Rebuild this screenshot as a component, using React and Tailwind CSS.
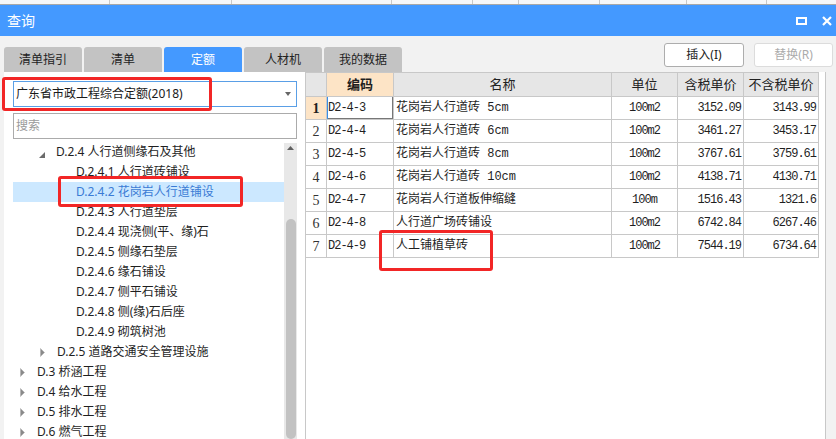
import React from 'react';

const tabs = ['清单指引', '清单', '定额', '人材机', '我的数据'];

const tree = [
  { text: 'D.2.4 人行道侧缘石及其他', tri: 'open', pad: 'pl-[26px]' },
  { text: 'D.2.4.1 人行道砖铺设', pad: 'pl-[63px]' },
  { text: 'D.2.4.2 花岗岩人行道铺设', pad: 'pl-[63px]', selected: true },
  { text: 'D.2.4.3 人行道垫层', pad: 'pl-[63px]' },
  { text: 'D.2.4.4 现浇侧(平、缘)石', pad: 'pl-[63px]' },
  { text: 'D.2.4.5 侧缘石垫层', pad: 'pl-[63px]' },
  { text: 'D.2.4.6 缘石铺设', pad: 'pl-[63px]' },
  { text: 'D.2.4.7 侧平石铺设', pad: 'pl-[63px]' },
  { text: 'D.2.4.8 侧(缘)石后座', pad: 'pl-[63px]' },
  { text: 'D.2.4.9 砌筑树池', pad: 'pl-[63px]' },
  { text: 'D.2.5 道路交通安全管理设施', tri: 'closed', pad: 'pl-[27px]' },
  { text: 'D.3 桥涵工程', tri: 'closed', pad: 'pl-[7px]' },
  { text: 'D.4 给水工程', tri: 'closed', pad: 'pl-[7px]' },
  { text: 'D.5 排水工程', tri: 'closed', pad: 'pl-[7px]' },
  { text: 'D.6 燃气工程', tri: 'closed', pad: 'pl-[7px]' },
];

const rows = [
  ['D2-4-3', '花岗岩人行道砖 5cm', '100m2', '3152.09', '3143.99'],
  ['D2-4-4', '花岗岩人行道砖 6cm', '100m2', '3461.27', '3453.17'],
  ['D2-4-5', '花岗岩人行道砖 8cm', '100m2', '3767.61', '3759.61'],
  ['D2-4-6', '花岗岩人行道砖 10cm', '100m2', '4138.71', '4130.71'],
  ['D2-4-7', '花岗岩人行道板伸缩缝', '100m', '1516.43', '1321.6'],
  ['D2-4-8', '人行道广场砖铺设', '100m2', '6742.84', '6267.46'],
  ['D2-4-9', '人工铺植草砖', '100m2', '7544.19', '6734.64'],
];

const mono = "font-['Liberation_Mono','Noto_Sans_CJK_SC',monospace]";

const Triangle = ({ type }) =>
  type === 'open' ? (
    <svg width="6" height="6" viewBox="0 0 6 6" className="mt-[5px]">
      <polygon points="6,0 6,6 0,6" fill="#6b6b6b" />
    </svg>
  ) : (
    <svg width="5" height="9" viewBox="0 0 5 9">
      <polygon points="0.5,0.5 4.5,4.5 0.5,8.5" fill="#8a8a8a" stroke="#b0b0b0" strokeWidth="0.6" />
    </svg>
  );

const App = () => {
  return (
    <div className="relative w-[836px] h-[439px] overflow-hidden bg-[#F2F2F2] flex flex-col font-['Noto_Sans','Noto_Sans_CJK_SC',sans-serif] text-[#1f1f1f]">
      {/* strip of the window behind */}
      <div className="h-[5px] flex bg-[#F6F7F9] border-b border-[#A8A8A8]">
        <div className="w-[110px] border-r border-[#C8C8C8]" />
        <div className="w-[122px] border-r border-[#C8C8C8]" />
        <div className="w-[160px] border-r border-[#C8C8C8]" />
        <div className="w-[81px] border-r border-[#C8C8C8]" />
        <div className="w-[46px] border-r border-[#C8C8C8]" />
        <div className="w-[81px] border-r border-[#C8C8C8]" />
        <div className="w-[87px] border-r border-[#C8C8C8]" />
        <div className="w-[80px] border-r border-[#C8C8C8]" />
      </div>

      {/* title bar */}
      <div className="h-[31px] shrink-0 bg-[#4499FF] flex items-center justify-between pl-[7px] pr-[4px]">
        <span className="text-[14px] text-white leading-none">查询</span>
        <div className="flex items-center gap-[15px]">
          <div className="w-[11px] h-[8px] border-2 border-white" />
          <svg width="10" height="10" viewBox="0 0 10 10">
            <path d="M1 1L9 9M9 1L1 9" stroke="white" strokeWidth="2.2" />
          </svg>
        </div>
      </div>

      {/* body */}
      <div className="flex-1 min-h-0 flex flex-col pl-[4px] pr-[3px]">
        <div className="h-[36px] shrink-0 flex justify-between">
          <div className="self-end flex gap-[2px]">
            {tabs.map((t) => (
              <div
                key={t}
                className={
                  t === '定额'
                    ? 'w-[78px] h-[25px] rounded-t-[3px] bg-[#4499FF] text-white text-[12px] flex items-center justify-center'
                    : 'w-[78px] h-[25px] rounded-t-[3px] bg-[#C3C3C3] text-[#222] text-[12px] flex items-center justify-center'
                }
              >
                {t}
              </div>
            ))}
          </div>
          <div className="flex gap-[10px] pt-[7px]">
            <button className="w-[80px] h-[24px] rounded-[3px] border border-[#ADADAD] bg-white text-[12px] text-[#222]">
              插入(I)
            </button>
            <button className="w-[79px] h-[24px] rounded-[3px] border border-[#DCDCDC] bg-white text-[12px] text-[#ABABAB]">
              替换(R)
            </button>
          </div>
        </div>

        <div className="flex-1 min-h-0 flex">
          {/* left panel */}
          <div className="w-[301px] bg-white pl-[9px] pt-[9px] flex flex-col">
            <div className="w-[284px] h-[26px] border border-[#5A9FE6] flex items-center justify-between pl-[2px] pr-[5px]">
              <span className="text-[12px] text-[#1a1a1a]">广东省市政工程综合定额(2018)</span>
              <svg width="6" height="4" viewBox="0 0 6 4">
                <polygon points="0,0 6,0 3,4" fill="#666" />
              </svg>
            </div>
            <div className="mt-[6px] w-[284px] h-[26px] border border-[#ABABAB] flex items-center pl-[2px]">
              <span className="text-[12px] text-[#9a9a9a]">搜索</span>
            </div>
            <div className="mt-[3px] flex flex-1 min-h-0">
              <div className="w-[271px] flex flex-col">
                {tree.map((n) => (
                  <div
                    key={n.text}
                    className={`h-[20px] shrink-0 flex items-center ${n.pad} ${n.selected ? 'bg-[#CCE8FF] text-[#3A7BD5]' : ''}`}
                  >
                    {n.tri && (
                      <span className="w-[17px] flex">
                        <Triangle type={n.tri} />
                      </span>
                    )}
                    <span className="text-[12px] leading-[20px] whitespace-nowrap">{n.text}</span>
                  </div>
                ))}
              </div>
              <div className="mt-[1px] w-[13px] bg-[#E8E8E8] flex flex-col items-center">
                <svg width="7" height="4" viewBox="0 0 7 4" className="mt-[3px]">
                  <polygon points="0,4 7,4 3.5,0" fill="#606060" />
                </svg>
                <div className="mt-[69px] w-[10px] flex-1 rounded-full bg-[#C2C2C2]" />
              </div>
            </div>
          </div>

          {/* right panel */}
          <div className="w-[521px] bg-white border-l border-r border-[#C8C8C8]">
            <div className="grid grid-cols-[21px_67px_218px_66px_66px_75px] border-t border-[#C8C8C8] w-[513px]">
              <div className="h-[24px] bg-[#E6E6E6] border-r border-b border-[#C8C8C8]" />
              <div className="h-[24px] bg-[#FDE4C6] border-r border-b border-[#C8C8C8] text-[13px] font-bold flex items-center justify-center">
                编码
              </div>
              {['名称', '单位', '含税单价', '不含税单价'].map((h) => (
                <div
                  key={h}
                  className="h-[24px] bg-[#E6E6E6] border-r border-b border-[#C8C8C8] text-[13px] text-[#222] flex items-center justify-center"
                >
                  {h}
                </div>
              ))}
              {rows.map((r, i) => (
                <React.Fragment key={r[0]}>
                  <div
                    className={`h-[23px] border-r border-b border-[#C8C8C8] flex items-center justify-center font-['Liberation_Serif',serif] text-[14px] ${
                      i === 0 ? 'bg-[#FDE4C6] font-bold' : 'text-[#333]'
                    }`}
                  >
                    {i + 1}
                  </div>
                  <div
                    className={`h-[23px] border-r border-b border-[#C8C8C8] flex items-center pl-[1px] ${mono} text-[12px] tracking-[-1px] ${
                      i === 0 ? 'shadow-[inset_1px_0_0_#3A8EE6,inset_-1px_-1px_0_#777]' : ''
                    }`}
                  >
                    {r[0]}
                  </div>
                  <div className={`h-[23px] border-r border-b border-[#C8C8C8] flex items-center pl-[2px] ${mono} text-[12px] whitespace-nowrap`}>
                    {r[1]}
                  </div>
                  <div className={`h-[23px] border-r border-b border-[#C8C8C8] flex items-center justify-center ${mono} text-[12px] tracking-[-1px]`}>
                    {r[2]}
                  </div>
                  <div className={`h-[23px] border-r border-b border-[#C8C8C8] flex items-center justify-end pr-[2px] ${mono} text-[12px] tracking-[-1px]`}>
                    {r[3]}
                  </div>
                  <div className={`h-[23px] border-r border-b border-[#C8C8C8] flex items-center justify-end pr-[2px] ${mono} text-[12px] tracking-[-1px]`}>
                    {r[4]}
                  </div>
                </React.Fragment>
              ))}
            </div>
          </div>
        </div>
      </div>

      {/* red annotation boxes */}
      <div className="absolute left-[2px] top-[77px] w-[210px] h-[34px] border-[3px] border-[#F22626] rounded-[3px]" />
      <div className="absolute left-[58px] top-[176px] w-[185px] h-[31px] border-[3px] border-[#F22626] rounded-[3px]" />
      <div className="absolute left-[379px] top-[230px] w-[114px] h-[41px] border-[3px] border-[#F22626] rounded-[3px]" />
    </div>
  );
};

export default App;
